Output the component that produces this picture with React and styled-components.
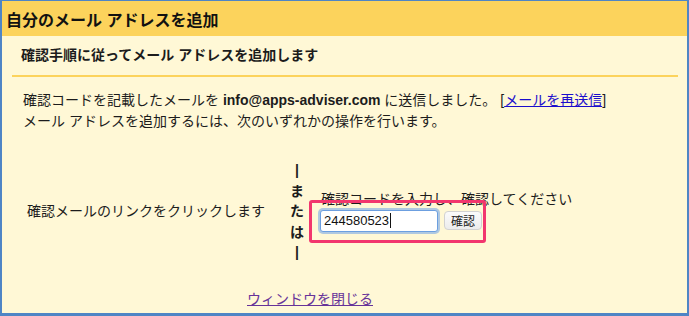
import styled, { createGlobalStyle } from "styled-components";

const Global = createGlobalStyle`
  html, body { margin: 0; padding: 0; background: #ffffff; }
  body {
    font-family: "Liberation Sans", "Noto Sans CJK JP", sans-serif;
    color: #1c1c1c;
  }
`;

const Frame = styled.div`
  box-sizing: border-box;
  width: 689px;
  height: 316px;
  background: #fff8d6;
  border: 2px solid #4f85c5;
  border-top-width: 1px;
  border-bottom-width: 3px;
  display: flex;
  flex-direction: column;
`;

const Header = styled.div`
  height: 35px;
  background: #fcd35c;
  display: flex;
  align-items: center;
  padding-left: 4px;
  font-size: 16px;
  font-weight: bold;
  color: #111;
`;

const Section = styled.div`
  margin: 0 9px 0 10px;
`;

const SubHead = styled.div`
  margin-top: 9px;
  padding: 0 9px 10px;
  line-height: 20px;
  font-size: 14px;
  font-weight: bold;
  border-bottom: 2px solid #fcd35c;
`;

const Para = styled.div`
  margin-top: 13px;
  padding-left: 11px;
  font-size: 14px;
  line-height: 21px;
`;

const Bold = styled.b`
  font-weight: bold;
`;

const Link = styled.a`
  color: ${(p) => (p.$visited ? "#663399" : "#1a0dcc")};
  text-decoration: underline;
  cursor: pointer;
`;

const Choice = styled.div`
  margin-top: 28px;
  padding-left: 25px;
  display: flex;
  align-items: center;
  font-size: 14px;
`;

const LeftCell = styled.div`
  width: 264px;
  line-height: 21px;
`;

const Sep = styled.div`
  width: 12px;
  display: flex;
  flex-direction: column;
  align-items: center;
  font-weight: bold;
  font-size: 14px;
  line-height: 20.5px;
`;

const RightCell = styled.div`
  margin-left: 17px;
  display: flex;
  flex-direction: column;
`;

const Label = styled.div`
  line-height: 20px;
  padding-left: 1px;
  margin-top: -2px;
`;

const InputRow = styled.div`
  position: relative;
  display: flex;
  align-items: center;
  gap: 6px;
  margin-top: 1px;
`;

const CodeBox = styled.div`
  box-sizing: border-box;
  width: 118px;
  height: 22px;
  background: #fff;
  border: 1px solid #6c9fe0;
  border-radius: 3px;
  box-shadow: 0 0 0 2px rgba(110, 160, 235, 0.55);
  display: flex;
  align-items: center;
  padding-left: 3px;
  font-size: 13px;
  color: #111;
`;

const Caret = styled.span`
  display: inline-block;
  width: 1px;
  height: 15px;
  background: #111;
  margin-left: 1px;
`;

const Button = styled.button`
  box-sizing: border-box;
  height: 19px;
  width: 38px;
  padding: 0;
  font-family: inherit;
  font-size: 12px;
  color: #222;
  background: linear-gradient(#fbfbfb, #ececec);
  border: 1px solid #d2d2d2;
  border-radius: 4px;
`;

const Highlight = styled.div`
  position: absolute;
  left: -11px;
  top: -10px;
  width: 177px;
  height: 43px;
  box-sizing: border-box;
  border: 3px solid #f2366e;
  border-radius: 3px;
  pointer-events: none;
`;

const Footer = styled.div`
  margin-top: 26px;
  padding-left: 245px;
  font-size: 14px;
  line-height: 20px;
`;

export default function App() {
  return (
    <>
      <Global />
      <Frame>
        <Header>自分のメール アドレスを追加</Header>
        <Section>
          <SubHead>確認手順に従ってメール アドレスを追加します</SubHead>
          <Para>
            確認コードを記載したメールを <Bold>info@apps-adviser.com</Bold> に送信しました。 [<Link>メールを再送信</Link>]
            <br />
            メール アドレスを追加するには、次のいずれかの操作を行います。
          </Para>
        </Section>
        <Choice>
          <LeftCell>確認メールのリンクをクリックします</LeftCell>
          <Sep>
            {["|", "ま", "た", "は", "|"].map((c, i) => (
              <span key={i}>{c}</span>
            ))}
          </Sep>
          <RightCell>
            <Label>確認コードを入力し、確認してください</Label>
            <InputRow>
              <CodeBox>
                244580523
                <Caret />
              </CodeBox>
              <Button>確認</Button>
              <Highlight />
            </InputRow>
          </RightCell>
        </Choice>
        <Footer>
          <Link $visited>ウィンドウを閉じる</Link>
        </Footer>
      </Frame>
    </>
  );
}
